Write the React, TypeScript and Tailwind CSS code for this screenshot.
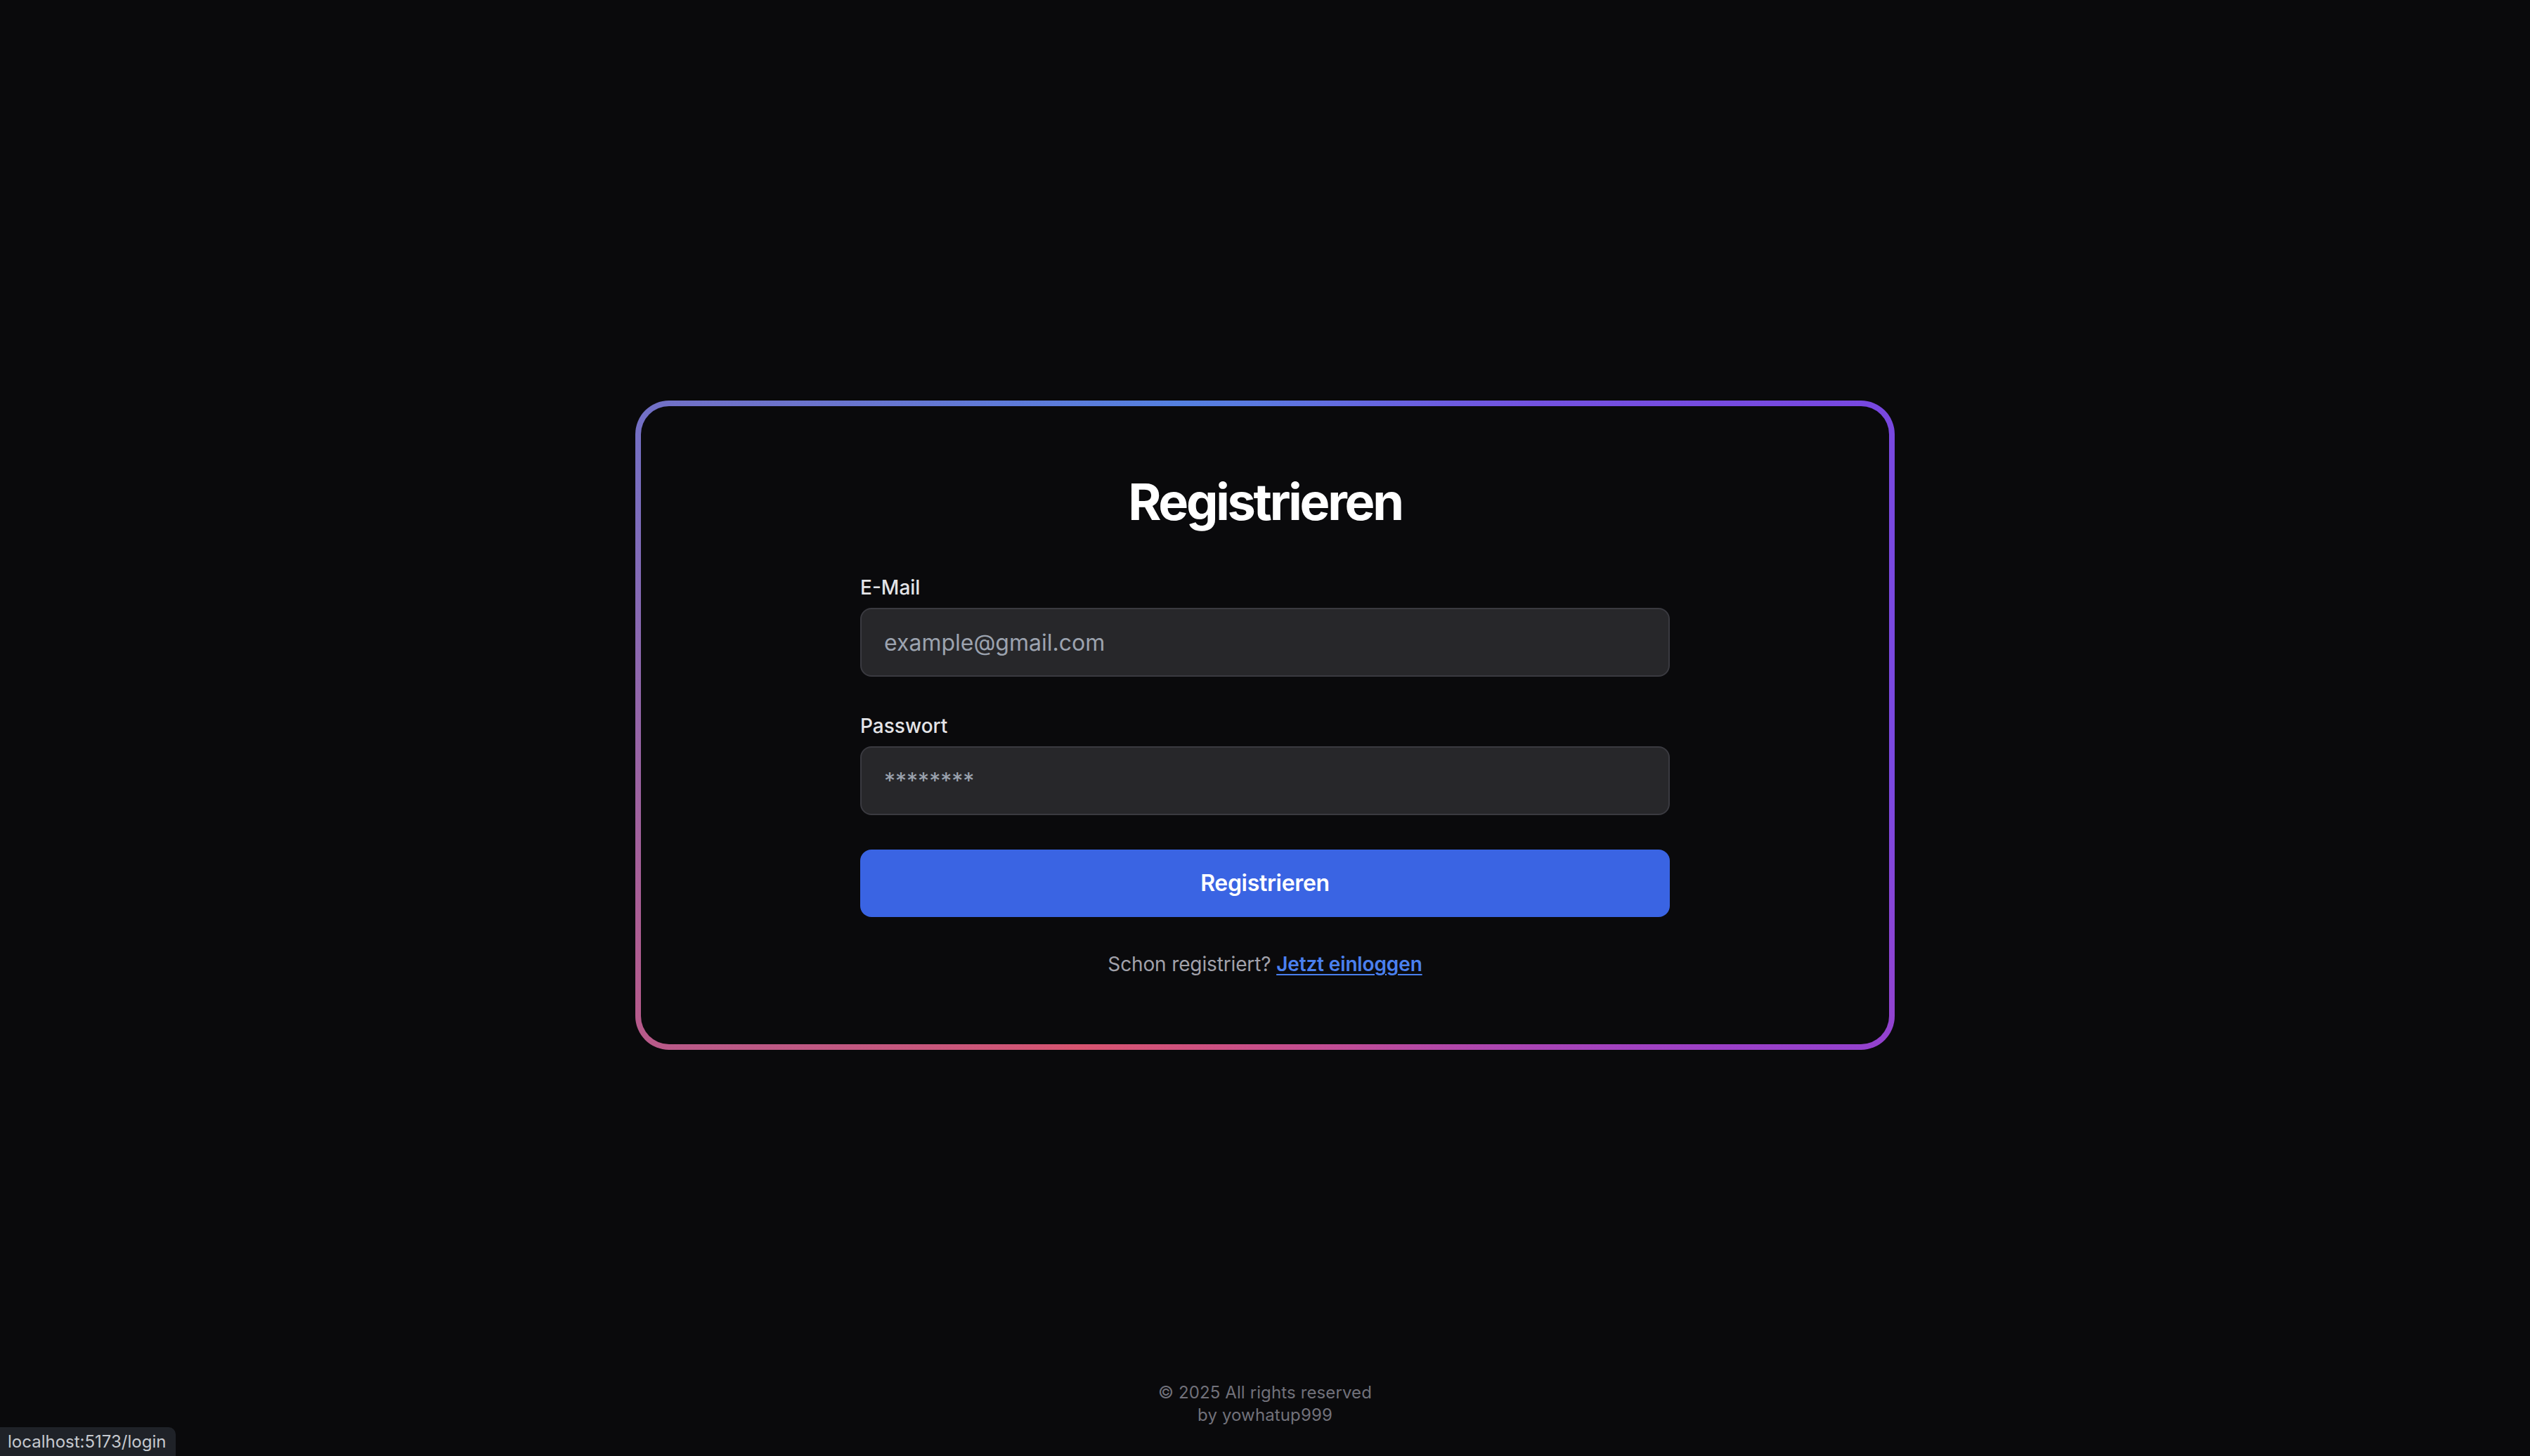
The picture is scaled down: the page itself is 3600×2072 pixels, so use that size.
import React from "react";

export default function App() {
  return (
    <div className="relative min-h-screen pb-[8px] grid grid-rows-[1fr_auto_1fr] bg-[#0a0a0c] font-['Inter',sans-serif]">
      <div />
      <div className="flex justify-center">
        <div className="w-[1792px] rounded-[48px] p-[8px] bg-[conic-gradient(from_0deg_at_50%_50%,#5b78e0_0deg,#7352e0_40deg,#7848e0_62deg,#7b48e0_95deg,#9c40c8_125deg,#c04c98_165deg,#d85470_210deg,#b85a8a_243deg,#9565a8_270deg,#7270c6_297deg,#5f7ad8_320deg,#5480e0_345deg,#5b78e0_360deg)]">
          <div className="rounded-[40px] bg-[#0a0a0c] pt-[96px] pb-[94px] px-[96px]">
            <div className="mx-auto w-[1152px] flex flex-col">
              <h1 className="text-center text-[72px] leading-[80px] font-bold tracking-[-0.045em] text-white mb-[62px]">
                Registrieren
              </h1>
              <label className="block text-[28px] leading-[40px] font-medium text-[#e4e4e7] mb-[9px]">
                E-Mail
              </label>
              <input
                type="email"
                placeholder="example@gmail.com"
                className="w-full h-[98px] rounded-[16px] border-2 border-[#3a3a40] bg-[#27272a] px-[32px] text-[32px] text-white placeholder:text-[#9ca3af] outline-none"
              />
              <label className="block mt-[50px] text-[28px] leading-[40px] font-medium text-[#e4e4e7] mb-[9px]">
                Passwort
              </label>
              <input
                type="password"
                placeholder="********"
                className="w-full h-[98px] rounded-[16px] border-2 border-[#3a3a40] bg-[#27272a] px-[32px] text-[32px] text-white placeholder:text-[#9ca3af] outline-none"
              />
              <button className="mt-[49px] w-full h-[96px] rounded-[16px] bg-[#3a64e3] text-white text-[32px] font-semibold tracking-[-0.01em]">
                Registrieren
              </button>
              <p className="mt-[47px] text-center text-[28px] leading-[40px] text-[#a1a1aa] tracking-[-0.005em]">
                Schon registriert?{" "}
                <a href="#" className="text-[#4a80ef] font-semibold underline underline-offset-[4px] decoration-2">
                  Jetzt einloggen
                </a>
              </p>
            </div>
          </div>
        </div>
      </div>
      <div className="flex items-end justify-center pb-[34px]">
        <footer className="text-center text-[24px] leading-[32px] text-[#71717a] tracking-[0.005em]">
          <div>© 2025 All rights reserved</div>
          <div>by yowhatup999</div>
        </footer>
      </div>
      <div className="fixed bottom-0 left-0 h-[41px] px-[11px] pr-[14px] rounded-tr-[10px] bg-[#1f2228] text-[#c5c9cf] text-[24px] leading-[41px]">
        localhost:5173/login
      </div>
    </div>
  );
}
